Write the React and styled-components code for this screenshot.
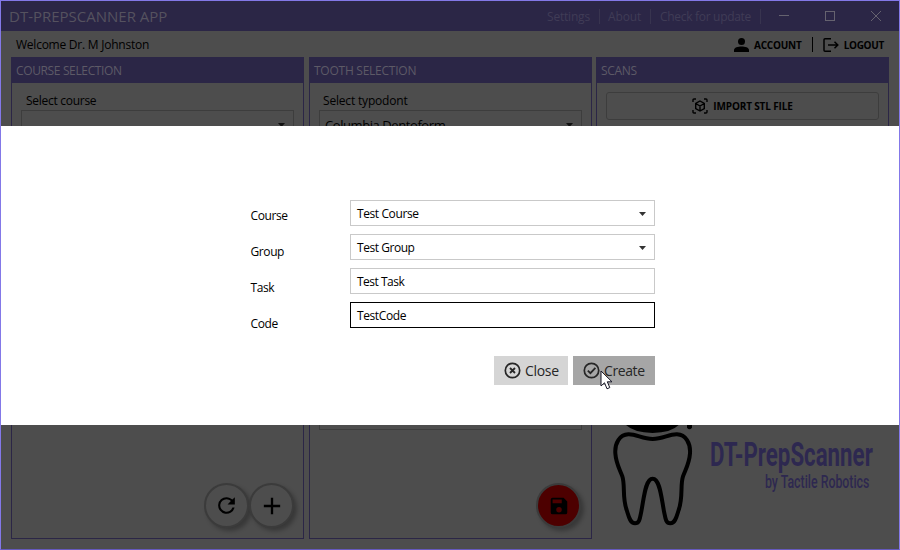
import React from "react";
import styled, { createGlobalStyle } from "styled-components";

const dim = {
  page: "#4d4d4d",
  purple: "#2b2646",
  line: "#3d3d3d",
  edge: "#8378e8",
};

const GlobalStyle = createGlobalStyle`
  * { box-sizing: border-box; }
  body { margin: 0; font-family: "Open Sans", "Noto Sans", sans-serif; font-size: 12px; color: #000; overflow: hidden; }
`;

const Window = styled.div`
  position: relative;
  width: 900px;
  height: 550px;
  display: flex;
  flex-direction: column;
  background: ${dim.page};
  border: 1px solid ${dim.edge};
  border-bottom-color: #6559bd;
`;

const Label = styled.span`
  white-space: nowrap;
  font-size: ${(p) => p.$size || 12}px;
  letter-spacing: ${(p) => p.$track || 0}px;
`;

const TitleBar = styled.header`
  flex: 0 0 30px;
  display: flex;
  align-items: center;
  background: ${dim.purple};
  color: #55525f;
  padding: 0 0 0 8px;
`;

const TitleLinks = styled.nav`
  margin-left: auto;
  display: flex;
  align-items: center;
  color: #403c56;
`;

const TitleLink = styled.a`
  width: ${(p) => p.$width}px;
  height: 15px;
  line-height: 15px;
  padding-left: ${(p) => p.$pad}px;
  border-right: 1px solid #38344f;
`;

const Controls = styled.svg`
  display: block;
  width: 138px;
  height: 30px;
`;

const UserBar = styled.div`
  flex: 0 0 26px;
  display: flex;
  align-items: center;
  padding: 1px 15px 0 15px;
`;

const UserActions = styled.div`
  margin-left: auto;
  display: flex;
  align-items: center;
  font-weight: 700;
`;

const Action = styled.div`
  display: flex;
  align-items: center;
  gap: ${(p) => p.$gap}px;
`;

const Divider = styled.i`
  width: 1px;
  height: 15px;
  margin: 0 10px;
  background: #000;
`;

const Columns = styled.main`
  flex: 1;
  display: grid;
  grid-template-columns: 293px 283px 293px;
  column-gap: 5px;
  padding: 0 0 10px 10px;
  & > :last-child { margin-left: -1px; }
`;

const Panel = styled.section`
  display: flex;
  flex-direction: column;
  width: ${(p) => (p.$width ? `${p.$width}px` : "auto")};
  height: ${(p) => p.$height || 482}px;
  border: 1px solid ${dim.purple};
`;

const PanelHeader = styled.h2`
  flex: 0 0 25px;
  display: flex;
  align-items: center;
  margin: 0;
  padding: 0 0 1px 4px;
  font-weight: 400;
  color: #5d5a66;
  background: ${dim.purple};
`;

const PanelBody = styled.div`
  flex: 1;
  display: flex;
  flex-direction: column;
  padding: 9px 9px 10px;
`;

const FieldLabel = styled.div`
  height: 18px;
  line-height: 18px;
  padding-left: ${(p) => p.$pad}px;
`;

const DimSelect = styled.div`
  height: 28px;
  display: flex;
  align-items: center;
  justify-content: space-between;
  padding: 1px 8px 0 5px;
  border: 1px solid ${dim.line};
`;

const ListBox = styled.div`
  height: 284px;
  margin-top: 8px;
  border: 1px solid ${dim.line};
`;

const RoundButtons = styled.div`
  margin-top: auto;
  display: flex;
  justify-content: flex-end;
  padding-right: ${(p) => p.$inset || 0}px;
`;

const RoundButton = styled.button`
  width: 45px;
  height: 45px;
  padding: 0;
  display: flex;
  align-items: center;
  justify-content: center;
  border: 2px solid #3b3b3b;
  border-radius: 50%;
  background: ${(p) => (p.$danger ? "#4d0000" : dim.page)};
  box-shadow: 3px 3px 4px rgba(0, 0, 0, 0.28);
`;

const ImportButton = styled.button`
  height: 28px;
  width: 273px;
  display: flex;
  align-items: center;
  justify-content: center;
  gap: 5px;
  padding: 0;
  border: 1px solid ${dim.line};
  border-radius: 3px;
  background: transparent;
  font: inherit;
  font-weight: 700;
  color: #000;
`;

const Brand = styled.div`
  display: flex;
  height: 103px;
  margin: 25px 0 0 14px;
`;

const ToothSvg = styled.svg`
  flex: none;
  width: 85px;
  height: 103px;
`;

const BrandText = styled.div`
  flex: none;
  width: 178px;
  padding: 13px 0 0 15px;
  color: #2d2850;
  font-family: Roboto, sans-serif;
  white-space: nowrap;
`;

const BrandLine = styled.div`
  width: max-content;
  font-size: ${(p) => p.$size}px;
  font-weight: ${(p) => p.$weight};
  line-height: ${(p) => p.$height}px;
  margin-left: ${(p) => p.$left || 0}px;
  transform: scaleX(${(p) => p.$scale});
  transform-origin: left center;
`;

const Dialog = styled.div`
  position: absolute;
  top: 125px;
  left: 0;
  right: 0;
  height: 299px;
  padding: 74px 0 0 249.5px;
  background: #fff;
`;

const Form = styled.form`
  display: grid;
  grid-template-columns: 99.5px 305px;
`;

const FormLabels = styled.div`
  display: grid;
  grid-auto-rows: 36px;
  height: 128px;
  line-height: 32px;
`;

const Fields = styled.div`
  display: grid;
  grid-auto-rows: 26px;
  row-gap: 8px;
`;

const Field = styled.div`
  display: flex;
  align-items: center;
  justify-content: space-between;
  padding: 1px 8px 0 6px;
  border: 1px solid ${(p) => (p.$focused ? "#000" : "#c9c9c9")};
`;

const Buttons = styled.div`
  width: 404.5px;
  margin-top: 28px;
  display: flex;
  justify-content: flex-end;
  gap: 5px;
`;

const DialogButton = styled.button`
  width: ${(p) => p.$width}px;
  height: 29px;
  display: flex;
  align-items: center;
  gap: 4.5px;
  padding: 0 0 0 ${(p) => p.$pad}px;
  border: 0;
  font: inherit;
  color: #262626;
  background: ${(p) => (p.$hover ? "#a6a6a6" : "#d5d5d5")};
`;

const Pointer = styled.svg`
  position: absolute;
  left: 599px;
  top: 244px;
  width: 14px;
  height: 21px;
`;

const Arrow = ({ fill = "#333" }) => (
  <svg width="7" height="4" viewBox="0 0 7 4"><path d="M0 0H7L3.5 4Z" fill={fill} /></svg>
);

const CircleIcon = ({ mark }) => (
  <svg width="17" height="17" viewBox="0 0 17 17" fill="none" stroke="#262626" strokeWidth="1.7">
    <circle cx="8.5" cy="8.5" r="7.2" />
    <path d={mark} strokeWidth="1.8" />
  </svg>
);

const MdIcon = ({ d, size = 24 }) => (
  <svg width={size} height={size} viewBox="0 0 24 24"><path d={d} /></svg>
);

const Tooth = () => (
  <ToothSvg viewBox="60 30 255 309" fill="none" stroke="#000" strokeWidth="12">
    <path d="M108 30Q132 53 188 54Q244 53 266 30Z" fill="#000" stroke="none" />
    <path d="M291 30H306V38Q298 47 291 38Z" fill="#000" stroke="none" />
    <path d="M188 72C157 72 139 57 115 58C89 59 74 84 76 115C78 146 90 164 97 184C106 211 96 246 110 285C116 304 120 325 135 325C149 325 150 309 154 289C162 248 166 191 188 191C210 191 214 248 222 289C226 309 227 325 241 325C256 325 260 304 266 285C280 246 270 211 279 184C286 164 298 146 300 115C302 84 287 59 261 58C237 57 219 72 188 72Z" />
  </ToothSvg>
);

const FIELDS = [
  { value: "Test Course", track: -0.4, select: true },
  { value: "Test Group", track: -0.45, select: true },
  { value: "Test Task", track: -0.5 },
  { value: "TestCode", track: -0.4, focused: true },
];

export default function App() {
  return (
    <>
      <GlobalStyle />
      <Window>
        <TitleBar>
          <Label $size={15}>DT-PREPSCANNER APP</Label>
          <TitleLinks>
            <TitleLink $width={54} $pad={1}><Label $track={-0.2}>Settings</Label></TitleLink>
            <TitleLink $width={51} $pad={8}><Label $track={-0.1}>About</Label></TitleLink>
            <TitleLink $width={110} $pad={9}><Label $track={-0.3}>Check for update</Label></TitleLink>
            <Controls viewBox="0 0 138 30" fill="none" stroke="#65626f" shapeRendering="crispEdges">
              <path d="M18 14.5H28M64.5 10.5H73.5V19.5H64.5Z" />
              <path d="M110 10L120 20M120 10L110 20" shapeRendering="auto" />
            </Controls>
          </TitleLinks>
        </TitleBar>
        <UserBar>
          <Label $track={-0.24}>Welcome Dr. M Johnston</Label>
          <UserActions>
            <Action $gap={5}>
              <svg width="15" height="14" viewBox="0 0 15 14"><circle cx="7.5" cy="3.5" r="3.5" /><path d="M0 14V12C0 9.5 4 8.5 7.5 8.5S15 9.5 15 12V14Z" /></svg>
              <Label $size={10} $track={-0.2}>ACCOUNT</Label>
            </Action>
            <Divider />
            <Action $gap={5}>
              <svg width="16" height="14" viewBox="0 0 16 14" fill="none" stroke="#000" strokeWidth="1.5"><path d="M8 .75H2Q1 .75 1 1.75V12.25Q1 13.25 2 13.25H8M5 7H14.5M11.5 3.8L14.8 7L11.5 10.2" /></svg>
              <Label $size={10} $track={-0.3}>LOGOUT</Label>
            </Action>
          </UserActions>
        </UserBar>
        <Columns>
          <Panel>
            <PanelHeader><Label $track={-0.36}>COURSE SELECTION</Label></PanelHeader>
            <PanelBody>
              <FieldLabel $pad={5}><Label $track={-0.28}>Select course</Label></FieldLabel>
              <DimSelect><span /><Arrow fill="#111" /></DimSelect>
              <RoundButtons>
                <RoundButton><MdIcon size={25} d="M17.65 6.35C16.2 4.9 14.21 4 12 4a8 8 0 1 0 7.73 10h-2.08A6 6 0 1 1 12 6c1.66 0 3.14.69 4.22 1.78L13 11h7V4l-2.35 2.35z" /></RoundButton>
                <RoundButton><MdIcon size={28} d="M19 13h-6v6h-2v-6H5v-2h6V5h2v6h6v2z" /></RoundButton>
              </RoundButtons>
            </PanelBody>
          </Panel>
          <Panel>
            <PanelHeader><Label $track={-0.25}>TOOTH SELECTION</Label></PanelHeader>
            <PanelBody>
              <FieldLabel $pad={4}><Label $track={-0.18}>Select typodont</Label></FieldLabel>
              <DimSelect><Label $size={13} $track={-0.42}>Columbia Dentoform</Label><Arrow fill="#111" /></DimSelect>
              <ListBox />
              <RoundButtons $inset={1}>
                <RoundButton $danger><MdIcon size={22} d="M17 3H5a2 2 0 0 0-2 2v14a2 2 0 0 0 2 2h14a2 2 0 0 0 2-2V7l-4-4zm-5 16a3 3 0 1 1 0-6 3 3 0 0 1 0 6zm3-10H5V5h10v4z" /></RoundButton>
              </RoundButtons>
            </PanelBody>
          </Panel>
          <div>
            <Panel $width={293} $height={343}>
              <PanelHeader><Label $track={-0.3}>SCANS</Label></PanelHeader>
              <PanelBody>
                <ImportButton>
                  <svg width="16" height="16" viewBox="0 0 16 16" fill="none" stroke="#000" strokeWidth="1.4"><path d="M1 4V2Q1 1 2 1H4M12 1H14Q15 1 15 2V4M15 12V14Q15 15 14 15H12M4 15H2Q1 15 1 14V12M8 3L12.3 5.5V10.5L8 13L3.7 10.5V5.5ZM3.7 5.5L8 8L12.3 5.5M8 8V13" /></svg>
                  <Label $size={10} $track={-0.15}>IMPORT STL FILE</Label>
                </ImportButton>
              </PanelBody>
            </Panel>
            <Brand>
              <Tooth />
              <BrandText>
                <BrandLine $size={33} $weight={700} $height={34} $scale={0.675}>DT-PrepScanner</BrandLine>
                <BrandLine $size={19} $weight={500} $height={20} $left={55} $scale={0.65}>by Tactile Robotics</BrandLine>
              </BrandText>
            </Brand>
          </div>
        </Columns>
        <Dialog>
          <Form>
            <FormLabels>
              {["Course", "Group", "Task", "Code"].map((name) => (
                <Label key={name} $track={-0.4}>{name}</Label>
              ))}
            </FormLabels>
            <Fields>
              {FIELDS.map((f) => (
                <Field key={f.value} $focused={f.focused}>
                  <Label $track={f.track}>{f.value}</Label>
                  {f.select && <Arrow />}
                </Field>
              ))}
            </Fields>
          </Form>
          <Buttons>
            <DialogButton $width={74} $pad={9.5}>
              <CircleIcon mark="M6 6L11 11M11 6L6 11" />
              <Label $size={14} $track={-0.3}>Close</Label>
            </DialogButton>
            <DialogButton $width={82} $pad={9.5} $hover>
              <CircleIcon mark="M4.8 8.7L7.4 11.2L12.4 5.8" />
              <Label $size={14} $track={-0.4}>Create</Label>
            </DialogButton>
          </Buttons>
          <Pointer viewBox="0 0 14 21"><path d="M1 1V16L4.5 12.8L7 18.8L9.8 17.6L7.3 11.8H12Z" fill="#fff" stroke="#151525" /></Pointer>
        </Dialog>
      </Window>
    </>
  );
}
